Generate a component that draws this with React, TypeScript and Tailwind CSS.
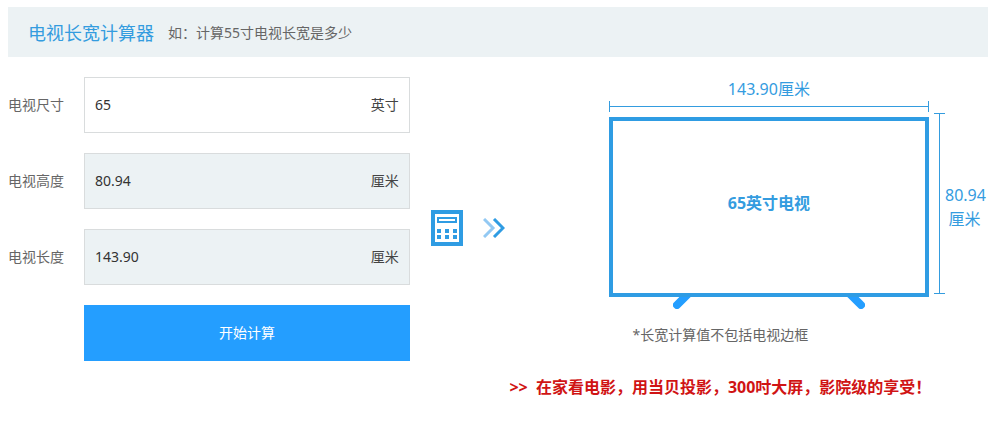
import { useState } from "react";
import type { FormEvent } from "react";

const CM_PER_INCH = 2.54;

function measure(inches: number) {
  const diagonal = Math.sqrt(16 * 16 + 9 * 9);
  return {
    width: ((inches * CM_PER_INCH * 16) / diagonal).toFixed(2),
    height: ((inches * CM_PER_INCH * 9) / diagonal).toFixed(2),
  };
}

type FieldProps = {
  id: string;
  label: string;
  unit: string;
  value: string;
  onChange?: (value: string) => void;
};

function Field({ id, label, unit, value, onChange }: FieldProps) {
  const fill = onChange ? "bg-white" : "bg-[#ecf2f4]";
  return (
    <div className="flex items-center">
      <label htmlFor={id} className="w-[76px] shrink-0 text-[#666]">
        {label}
      </label>
      <div className={`flex h-14 min-w-0 flex-1 items-center border border-[#d9dcdd] px-2.5 ${fill}`}>
        <input
          id={id}
          className="min-w-0 flex-1 bg-transparent text-[#333] outline-none"
          value={value}
          readOnly={!onChange}
          onChange={(event) => onChange?.(event.target.value)}
        />
        <span className="text-[#444]">{unit}</span>
      </div>
    </div>
  );
}

function CalculatorIcon() {
  return (
    <svg width="32" height="36" viewBox="0 0 32 36" fill="none" aria-hidden="true">
      <rect x="2" y="2" width="28" height="32" stroke="#2f9ce3" strokeWidth="4" />
      <rect x="7" y="8" width="18" height="4" stroke="#2f9ce3" strokeWidth="2" />
      <path
        d="M6 19h4v4H6zM14 19h4v4h-4zM22 19h4v4h-4zM6 25h4v4H6zM14 25h4v4h-4zM22 25h4v4h-4z"
        fill="#2f9ce3"
      />
    </svg>
  );
}

function ChevronsIcon() {
  return (
    <svg width="22" height="20" viewBox="0 0 22 20" fill="none" strokeWidth="3" aria-hidden="true">
      <path d="M1 1l9 9-9 9" stroke="#93c9f3" />
      <path d="M11 1l9 9-9 9" stroke="#2f9ce3" />
    </svg>
  );
}

function Legs() {
  return (
    <div className="flex h-3 justify-between overflow-hidden px-16">
      <svg width="18" height="12" viewBox="0 0 18 12" aria-hidden="true">
        <path d="M15 -3L4 8" stroke="#249eff" strokeWidth="8" strokeLinecap="round" />
      </svg>
      <svg width="18" height="12" viewBox="0 0 18 12" aria-hidden="true">
        <path d="M3 -3L14 8" stroke="#249eff" strokeWidth="8" strokeLinecap="round" />
      </svg>
    </div>
  );
}

export default function App() {
  const [size, setSize] = useState("65");
  const [shown, setShown] = useState("65");
  const { width, height } = measure(Number(shown) || 0);

  function submit(event: FormEvent) {
    event.preventDefault();
    setShown(size);
  }

  return (
    <main className="px-2 pt-[7px] pr-3 pb-6 font-['Noto_Sans','Noto_Sans_CJK_SC',sans-serif] text-sm">
      <header className="flex h-[50px] items-center gap-3.5 bg-[#ecf2f4] px-5 pt-0.5">
        <h1 className="text-lg text-[#349cdf]">电视长宽计算器</h1>
        <p className="text-[#666]">如：计算55寸电视长宽是多少</p>
      </header>

      <div className="mt-5 grid grid-cols-[41fr_59fr]">
        <form className="flex flex-col gap-5" onSubmit={submit}>
          <Field id="size" label="电视尺寸" unit="英寸" value={size} onChange={setSize} />
          <Field id="height" label="电视高度" unit="厘米" value={height} />
          <Field id="width" label="电视长度" unit="厘米" value={width} />
          <button type="submit" className="ml-[76px] h-14 bg-[#249eff] text-white">
            开始计算
          </button>
        </form>

        <div className="flex">
          <div className="mt-[133px] ml-[21px] flex h-9 shrink-0 items-center gap-5">
            <CalculatorIcon />
            <ChevronsIcon />
          </div>

          <section className="min-w-0 flex-1 pl-1">
            <div className="flex pl-[100px] text-base text-[#349cdf]">
              <div className="min-w-0 flex-1">
                <p className="text-center leading-6">{width}厘米</p>
                <div className="flex h-[11px] items-center border-x border-[#349cdf]">
                  <div className="h-px flex-1 bg-[#349cdf]" />
                </div>
                <div className="mt-[5px] flex h-[180px] items-center justify-center border-4 border-[#2f9ce3] pb-2 font-bold">
                  {shown}英寸电视
                </div>
                <Legs />
              </div>
              <div className="mt-9 ml-[5px] flex h-[181px] w-[11px] shrink-0 justify-center border-y border-[#349cdf]">
                <div className="w-px bg-[#349cdf]" />
              </div>
              <p className="mt-[106px] mr-1 w-[39px] shrink-0 text-center leading-6">
                {height}
                <br />
                厘米
              </p>
            </div>
            <div className="pr-14 text-center">
              <p className="mt-4 leading-5 text-[#666]">*长宽计算值不包括电视边框</p>
              <a
                href="#projector"
                className="mt-[30px] block text-base leading-6 font-bold whitespace-nowrap text-[#d01414]"
              >
                <span className="mr-1">&gt;&gt;</span> 在家看电影，用当贝投影，300吋大屏，影院级的享受！
              </a>
            </div>
          </section>
        </div>
      </div>
    </main>
  );
}
